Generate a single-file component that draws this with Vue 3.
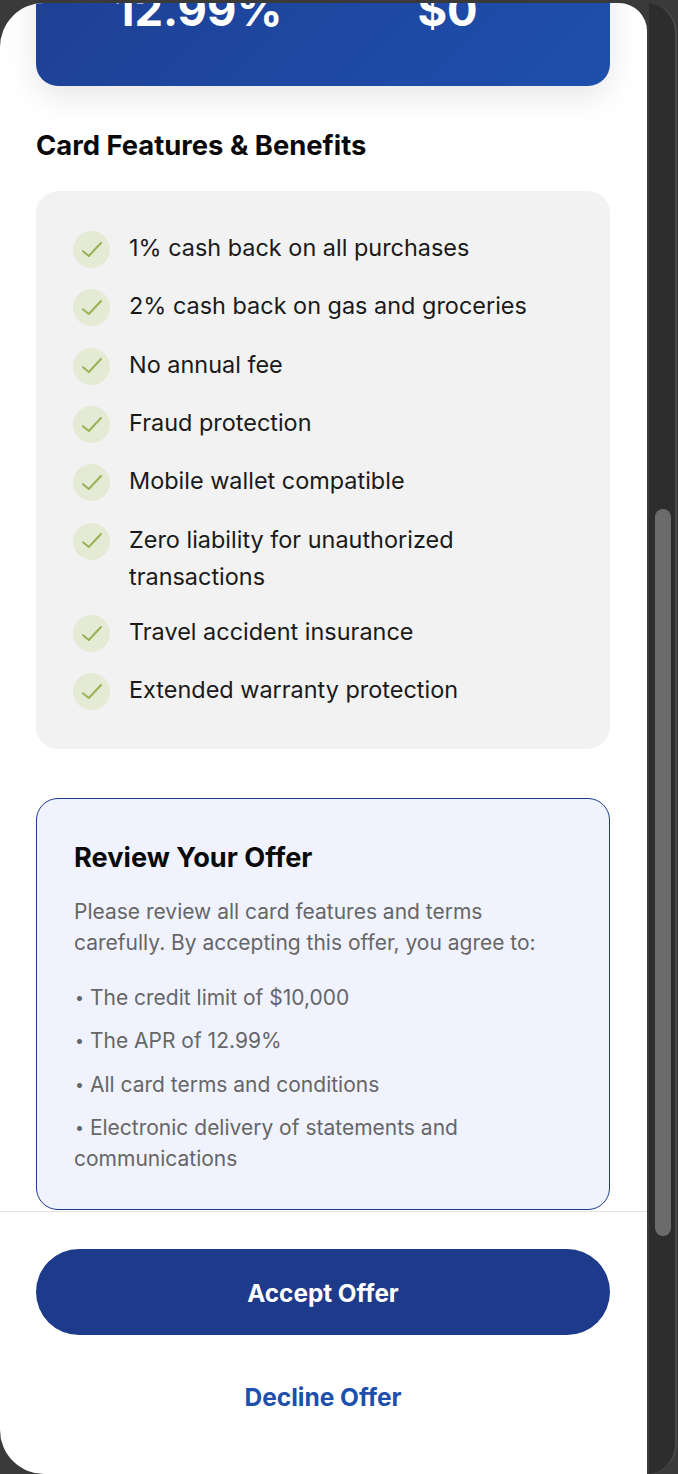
<template>
  <div class="shell">
    <div class="panel">
      <div class="scroll">
        <div class="hero">
          <span class="hero-value">12.99%</span>
          <span class="hero-value">$0</span>
        </div>

        <h2 class="section-title">Card Features &amp; Benefits</h2>

        <ul class="features">
          <li v-for="f in features" :key="f" class="feature">
            <span class="check">
              <svg viewBox="0 0 24 24" width="24" height="24" fill="none">
                <path d="M3 13.2L8.8 18L21 5" stroke="#97b356" stroke-width="2" stroke-linecap="round" stroke-linejoin="round" />
              </svg>
            </span>
            <span class="feature-text">{{ f }}</span>
          </li>
        </ul>

        <div class="review">
          <h3 class="review-title">Review Your Offer</h3>
          <p class="review-intro">Please review all card features and terms carefully. By accepting this offer, you agree to:</p>
          <p v-for="t in terms" :key="t" class="review-term"><span class="dot">•</span> {{ t }}</p>
        </div>
      </div>

      <div class="footer">
        <button class="accept">Accept Offer</button>
        <button class="decline">Decline Offer</button>
      </div>
    </div>

    <div class="rail">
      <div class="thumb" />
    </div>
  </div>
</template>

<script setup>
const features = [
  '1% cash back on all purchases',
  '2% cash back on gas and groceries',
  'No annual fee',
  'Fraud protection',
  'Mobile wallet compatible',
  'Zero liability for unauthorized transactions',
  'Travel accident insurance',
  'Extended warranty protection'
]

const terms = [
  'The credit limit of $10,000',
  'The APR of 12.99%',
  'All card terms and conditions',
  'Electronic delivery of statements and communications'
]
</script>

<style>
html,
body {
  margin: 0;
  background: #3a3a3a;
}
</style>

<style scoped>
.shell {
  display: flex;
  width: 678px;
  height: 1474px;
  padding-top: 3px;
  box-sizing: border-box;
  background: #3a3a3a;
  overflow: hidden;
  font-family: Inter, "Liberation Sans", sans-serif;
}

.panel {
  width: 647px;
  flex: none;
  display: flex;
  flex-direction: column;
  background: #fff;
  border-radius: 44px 28px 0 44px;
  overflow: hidden;
}

.scroll {
  flex: 1;
  min-height: 0;
  overflow: hidden;
  padding: 0 37px 0 36px;
}

.hero {
  height: 400px;
  margin-top: -317px;
  box-sizing: border-box;
  padding: 0 0 47px 79px;
  display: flex;
  align-items: flex-end;
  gap: 135px;
  border-radius: 22px;
  background: linear-gradient(135deg, #1e3a8a, #1e4fad);
  box-shadow: 0 10px 32px rgba(0, 0, 0, 0.1);
}

.hero-value {
  font-size: 45.3px;
  line-height: 58px;
  font-weight: 700;
  color: #fff;
}

.section-title {
  margin: 42px 0 29px;
  font-size: 27.4px;
  line-height: 34px;
  font-weight: 700;
  color: #0a0a0a;
}

.features {
  list-style: none;
  margin: 0 0 49px;
  padding: 37px 37px 36.5px;
  display: flex;
  flex-direction: column;
  gap: 16.35px;
  background: #f2f2f2;
  border-radius: 22px;
}

.feature {
  display: flex;
  gap: 19px;
}

.check {
  width: 37px;
  height: 37px;
  margin: 3px 0 2px;
  flex: none;
  display: flex;
  align-items: center;
  justify-content: center;
  border-radius: 50%;
  background: #e4ead4;
}

.feature-text {
  margin: 1px 0;
  font-size: 23.45px;
  line-height: 37px;
  color: #1a1a1a;
}

.review {
  padding: 39px 37px 35px;
  border: 1px solid #1e3a8a;
  border-radius: 22px;
  background: #f0f3fe;
}

.review-title {
  margin: 0 0 18px;
  font-size: 27.2px;
  line-height: 40px;
  font-weight: 700;
  color: #0a0a0a;
}

.review-intro,
.review-term {
  font-size: 21px;
  line-height: 31px;
  color: #666;
}

.review-intro {
  margin: 0 0 24px;
}

.review-term {
  margin: 0 0 12.4px;
}

.review-term:last-child {
  margin-bottom: 0;
}

.dot {
  font-size: 16px;
  line-height: 0;
  margin-left: 1px;
  vertical-align: 2px;
}

.footer {
  flex: none;
  height: 263px;
  box-sizing: border-box;
  padding: 37px 37px 0 36px;
  border-top: 1px solid #e5e5e5;
  display: flex;
  flex-direction: column;
}

.accept {
  height: 86px;
  padding-top: 2px;
  border: none;
  border-radius: 43px;
  background: #1e3a8a;
  color: #fff;
  font: 700 24.3px Inter, "Liberation Sans", sans-serif;
}

.decline {
  height: 38px;
  margin-top: 43px;
  border: none;
  background: none;
  color: #1e4fad;
  font: 700 24.5px Inter, "Liberation Sans", sans-serif;
}

.rail {
  flex: 1;
  position: relative;
  box-sizing: border-box;
  background: #2d2d2d;
  border-left: 2px solid #3a3a3a;
  border-right: 2px solid #4a4a4a;
  margin-right: 1px;
  border-radius: 0 34px 34px 0;
}

.thumb {
  position: absolute;
  left: 6px;
  top: 506px;
  width: 16px;
  height: 727px;
  border-radius: 8px;
  background: #6b6b6b;
}
</style>
